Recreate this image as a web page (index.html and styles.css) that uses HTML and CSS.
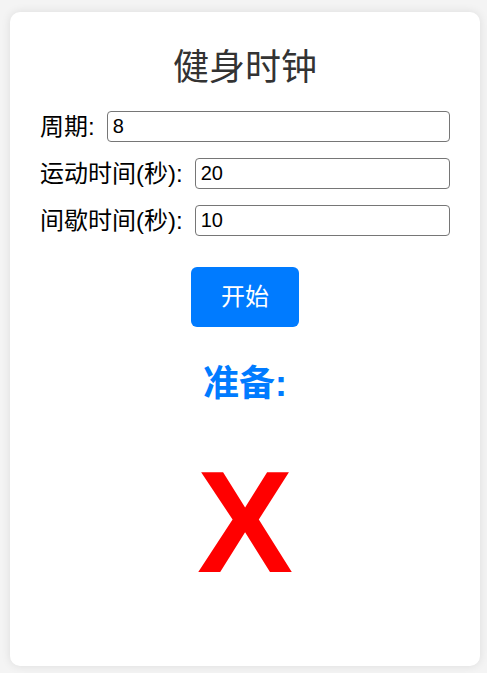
FILE: index.html
```html
<!DOCTYPE html>
<html>
  <head>
    <meta charset='utf-8'/>
    <title>健身时钟</title>
    <link rel="stylesheet" href="styles.css">
  </head>
  <body>
    <div class='container'>
      <h1>健身时钟</h1>

      <div class='row'>
        <label for='rounds'>周期:</label>
        <input id='rounds' type='number' value='8'>
      </div>
      <div class='row'>
        <label for='work'>运动时间(秒):</label>
        <input id='work' type='number' value='20'>
      </div>
      <div class='row'>
        <label for='rest'>间歇时间(秒):</label>
        <input id='rest' type='number' value='10'>
      </div>

      <div class='actions'>
        <button class='start-button'>开始</button>
      </div>

      <h2 class='status'>准备:</h2>
      <div class='timer'>X</div>
    </div>
  </body>
</html>
```

FILE: styles.css
```css
* {
  font-family: 'Liberation Sans', 'Noto Sans CJK SC', sans-serif;
  box-sizing: border-box;
}

body {
  margin: 0;
  padding: 12px 7px 8px 10px;
  background: #f4f4f4;
}

.container {
  background: #fff;
  border-radius: 10px;
  box-shadow: 0 0 10px rgba(0, 0, 0, 0.1);
  padding: 30px;
  height: 654px;
}

h1 {
  margin: 2px 0 19px;
  font-size: 36px;
  font-weight: normal;
  line-height: 48px;
  text-align: center;
  color: #333;
}

.row {
  display: flex;
  align-items: center;
  height: 31px;
  margin-bottom: 16px;
}

.row label {
  font-size: 24px;
  line-height: 31px;
  margin-right: 12px;
  color: #000;
}

.row input {
  flex: 1;
  min-width: 0;
  height: 31px;
  font-size: 20px;
  padding: 2px 5px;
  border: 1px solid #767676;
  border-radius: 4px;
  color: #000;
  -moz-appearance: textfield;
}

.row input::-webkit-inner-spin-button,
.row input::-webkit-outer-spin-button {
  -webkit-appearance: none;
  margin: 0;
}

.actions {
  display: flex;
  justify-content: center;
  margin-top: 31px;
}

.start-button {
  background: #007bff;
  color: #fff;
  border: none;
  border-radius: 6px;
  font-size: 24px;
  line-height: 36px;
  padding: 12px 30px;
  cursor: pointer;
}

.status {
  margin: 35px 0 0;
  font-size: 36px;
  line-height: 44px;
  font-weight: bold;
  text-align: center;
  color: #007bff;
}

.timer {
  margin-top: 45px;
  font-size: 144px;
  line-height: 1;
  font-weight: bold;
  text-align: center;
  color: #ff0000;
}
```
